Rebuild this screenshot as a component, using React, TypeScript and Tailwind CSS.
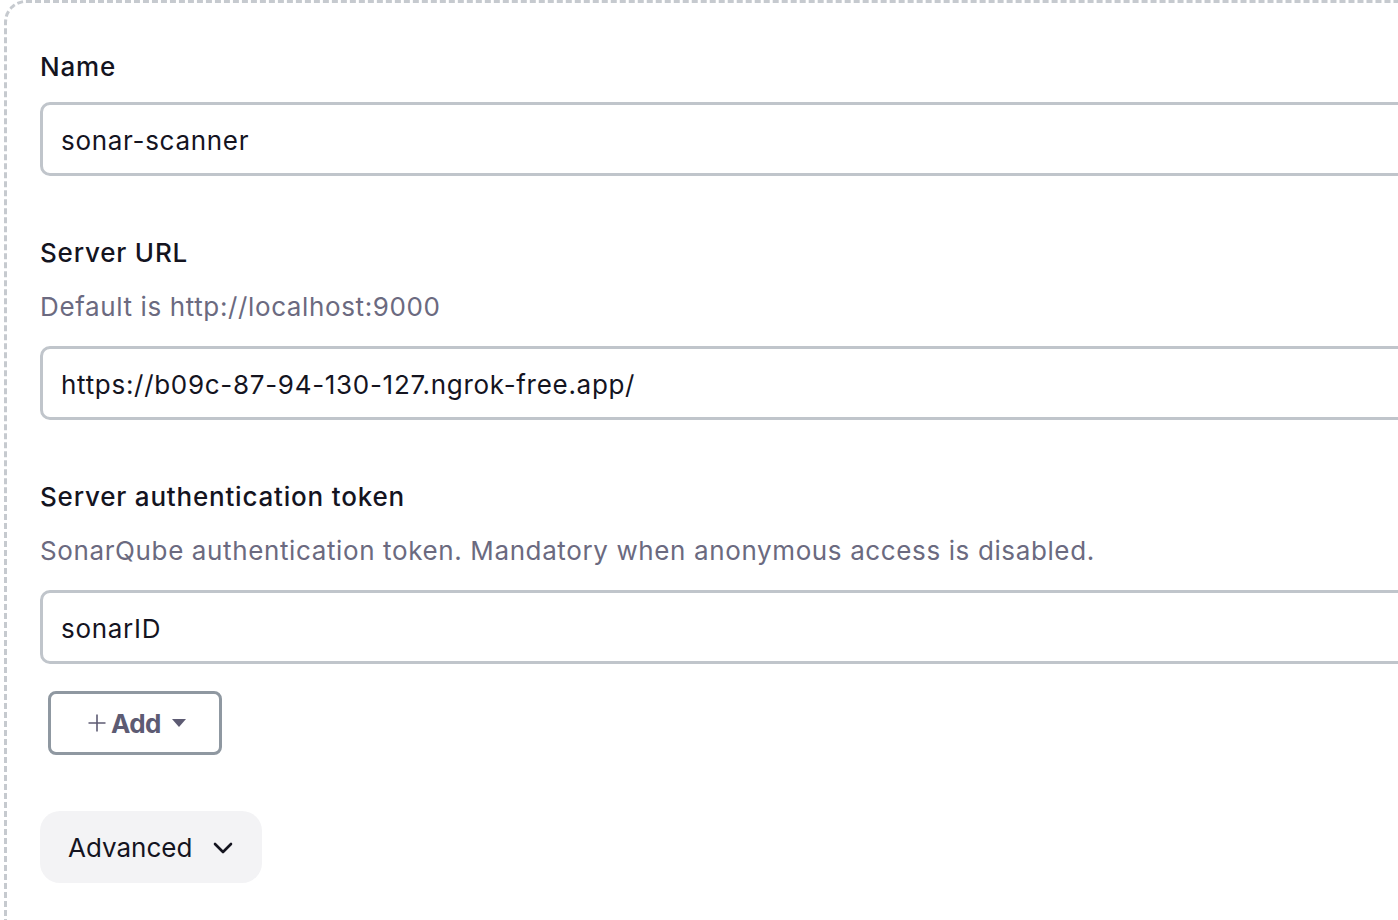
import React from "react";

const font = { fontFamily: "Inter, 'Noto Sans', sans-serif" };

function Field({ label, desc, value, first }: { label: string; desc?: string; value: string; first?: boolean }) {
  return (
    <div className={first ? "" : "mt-[57px]"}>
      <div className="text-[26px] leading-[39px] font-medium tracking-[0.8px] text-[#14141f]">{label}</div>
      {desc && <div className="mt-[15px] text-[26px] leading-[39px] tracking-[0.62px] text-[#6b6a80]">{desc}</div>}
      <div
        className={`${desc ? "mt-[20px]" : "mt-[16px]"} h-[74px] rounded-[10px] border-[3px] border-[#c0c5cb] bg-white flex items-center pl-[18px] pt-[2px] text-[26px] tracking-[0.7px] text-[#14141f]`}
      >
        {value}
      </div>
    </div>
  );
}

export default function App() {
  return (
    <div className="w-[1398px] h-[920px] overflow-hidden bg-white" style={font}>
      <div className="ml-[4px] w-[1600px] h-[1000px] border-[3px] border-dashed border-[#c6cacf] rounded-[22px] pl-[33px] pt-[44px]">
        <Field first label="Name" value="sonar-scanner" />
        <Field label="Server URL" desc="Default is http://localhost:9000" value="https://b09c-87-94-130-127.ngrok-free.app/" />
        <Field
          label="Server authentication token"
          desc="SonarQube authentication token. Mandatory when anonymous access is disabled."
          value="sonarID"
        />
        <div className="mt-[27px] ml-[8px] w-[174px] h-[64px] rounded-[8px] border-[3px] border-[#8f98a1] flex items-center pl-[37px] text-[#5d5b73]">
          <svg width="18" height="18" viewBox="0 0 18 18">
            <path d="M9 0.5v17M0.5 9h17" stroke="currentColor" strokeWidth="1.6" />
          </svg>
          <span className="ml-[5px] text-[26px] font-bold tracking-[-0.6px]">Add</span>
          <svg width="16" height="10" viewBox="0 0 16 10" className="ml-[10px]">
            <path d="M1 1h14L8 9z" fill="currentColor" />
          </svg>
        </div>
        <div className="mt-[56px] w-[222px] h-[72px] rounded-[20px] bg-[#f3f3f5] flex items-center pl-[28px] text-[26px] text-[#14141f]">
          <span>Advanced</span>
          <svg width="24" height="24" viewBox="0 0 24 24" className="ml-[19px]">
            <path d="M4 9l8 8 8-8" fill="none" stroke="currentColor" strokeWidth="2.6" strokeLinecap="round" strokeLinejoin="round" />
          </svg>
        </div>
      </div>
    </div>
  );
}
